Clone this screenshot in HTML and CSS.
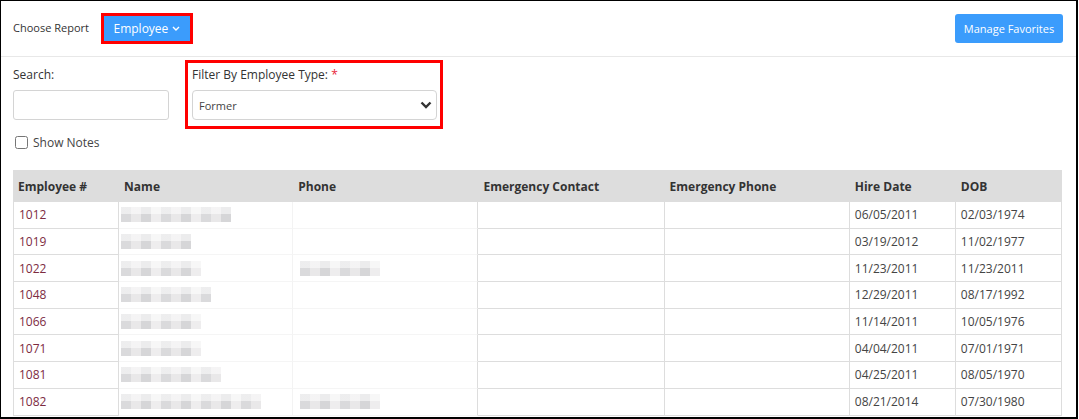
FILE: index.html
```html
<!DOCTYPE html>
<html lang="en">
<head>
    <meta charset="UTF-8">
    <title>Employee Report</title>
    <link rel="stylesheet" href="styles.css">
</head>
<body>
    <div class="frame">
        <div class="toolbar">
            <span class="choose">Choose Report</span>
            <div class="mark">
                <button class="btn report-btn">Employee
                    <svg width="8" height="5" viewBox="0 0 8 5"><path d="M1 1l3 3 3-3" fill="none" stroke="#fff" stroke-width="1.4"/></svg>
                </button>
            </div>
            <button class="btn fav-btn">Manage Favorites</button>
        </div>

        <div class="filters">
            <div class="field search">
                <label>Search:</label>
                <input type="text">
            </div>
            <div class="field mark type">
                <label>Filter By Employee Type: <span class="req">*</span></label>
                <div class="select">
                    <span>Former</span>
                    <svg width="12" height="8" viewBox="0 0 12 8"><path d="M1.5 1.5l4.5 4.5 4.5-4.5" fill="none" stroke="#333" stroke-width="2.4"/></svg>
                </div>
            </div>
        </div>

        <label class="notes"><input type="checkbox"> Show Notes</label>

        <table class="report">
            <thead>
                <tr>
                    <th class="c-id">Employee #</th>
                    <th class="c-name">Name</th>
                    <th class="c-phone">Phone</th>
                    <th class="c-ec">Emergency Contact</th>
                    <th class="c-ep">Emergency Phone</th>
                    <th class="c-date">Hire Date</th>
                    <th class="c-date">DOB</th>
                </tr>
            </thead>
            <tbody>
                <tr>
                    <td class="id">1012</td>
                    <td class="masked"><div class="blur w110"></div></td>
                    <td class="masked phone"></td>
                    <td></td><td></td>
                    <td>06/05/2011</td><td>02/03/1974</td>
                </tr>
                <tr>
                    <td class="id">1019</td>
                    <td class="masked"><div class="blur w70"></div></td>
                    <td class="masked phone"></td>
                    <td></td><td></td>
                    <td>03/19/2012</td><td>11/02/1977</td>
                </tr>
                <tr>
                    <td class="id">1022</td>
                    <td class="masked"><div class="blur w80"></div></td>
                    <td class="masked phone"><div class="blur w80"></div></td>
                    <td></td><td></td>
                    <td>11/23/2011</td><td>11/23/2011</td>
                </tr>
                <tr>
                    <td class="id">1048</td>
                    <td class="masked"><div class="blur w90"></div></td>
                    <td class="masked phone"></td>
                    <td></td><td></td>
                    <td>12/29/2011</td><td>08/17/1992</td>
                </tr>
                <tr>
                    <td class="id">1066</td>
                    <td class="masked"><div class="blur w80"></div></td>
                    <td class="masked phone"></td>
                    <td></td><td></td>
                    <td>11/14/2011</td><td>10/05/1976</td>
                </tr>
                <tr>
                    <td class="id">1071</td>
                    <td class="masked"><div class="blur w80"></div></td>
                    <td class="masked phone"></td>
                    <td></td><td></td>
                    <td>04/04/2011</td><td>07/01/1971</td>
                </tr>
                <tr>
                    <td class="id">1081</td>
                    <td class="masked"><div class="blur w100"></div></td>
                    <td class="masked phone"></td>
                    <td></td><td></td>
                    <td>04/25/2011</td><td>08/05/1970</td>
                </tr>
                <tr>
                    <td class="id">1082</td>
                    <td class="masked"><div class="blur w140"></div></td>
                    <td class="masked phone"><div class="blur w80"></div></td>
                    <td></td><td></td>
                    <td>08/21/2014</td><td>07/30/1980</td>
                </tr>
            </tbody>
        </table>
    </div>
</body>
</html>
```

FILE: styles.css
```css
body {
    margin: 0;
    font-family: "Open Sans", Arial, sans-serif;
    color: #333;
    background: #fff;
}

.frame {
    box-sizing: border-box;
    width: 1078px;
    height: 419px;
    overflow: hidden;
    border-style: solid;
    border-color: #000;
    border-width: 1px 2px 2px 1px;
}

/* top bar */
.toolbar {
    height: 55px;
    display: flex;
    align-items: center;
    padding: 0 13px 0 12px;
    border-bottom: 1px solid #e8e8e8;
}

.choose {
    font-size: 11px;
    margin-right: 12px;
    margin-top: -2px;
}

.mark {
    border: 3px solid #f00;
}

.btn {
    font-family: inherit;
    color: #fff;
    background-color: #3b9cfc;
    border: none;
    cursor: pointer;
    padding: 0;
}

.report-btn {
    width: 86px;
    height: 25px;
    font-size: 12px;
    display: flex;
    align-items: center;
    justify-content: center;
    gap: 4px;
}

.fav-btn {
    margin-left: auto;
    width: 108px;
    height: 29px;
    font-size: 11px;
    border-radius: 3px;
}

/* filters */
.filters {
    display: flex;
    align-items: flex-start;
    gap: 10px;
    padding: 3px 0 0 5px;
}

.field {
    display: flex;
    flex-direction: column;
    padding: 1px 3px 6px 4px;
}

.search {
    border: 3px solid transparent;
}

.field label {
    font-size: 12px;
    line-height: 17px;
    padding: 2px 0 0 0;
    margin-bottom: 7px;
}

.type {
    width: 245px;
}

.req {
    color: #e8253b;
}

.search input {
    box-sizing: border-box;
    width: 156px;
    height: 30px;
    border: 1px solid #d4d4d4;
    border-radius: 3px;
    margin: 0;
}

.select {
    box-sizing: border-box;
    width: 245px;
    height: 30px;
    border: 1px solid #d4d4d4;
    border-radius: 4px;
    display: flex;
    align-items: center;
    justify-content: space-between;
    padding: 0 4px 0 6px;
    font-size: 11px;
    color: #444;
}

.notes {
    display: flex;
    align-items: center;
    gap: 5px;
    font-size: 12px;
    color: #444;
    margin: 4px 0 0 14px;
    height: 18px;
}

.notes input {
    margin: 0;
    width: 13px;
    height: 13px;
}

/* table */
.report {
    margin: 19px 0 0 12px;
    width: 1049px;
    table-layout: fixed;
    border-collapse: separate;
    border-spacing: 0;
    font-size: 12px;
}

.report th {
    box-sizing: border-box;
    background: #dddddd;
    height: 32px;
    text-align: left;
    padding: 0 5px;
    font-weight: bold;
    color: #333;
}

.c-id { width: 106px; }
.c-name { width: 174px; }
.c-phone { width: 185px; }
.c-ec { width: 186px; }
.c-ep { width: 185px; }
.c-date { width: 106px; }

.report td {
    height: 25.7px;
    padding: 0 5px;
    border-right: 1px solid #ddd;
    border-bottom: 1px solid #ddd;
    color: #444;
    white-space: nowrap;
}

.report td:first-child {
    border-left: 1px solid #ddd;
}

.report td.id {
    color: #7d2b3f;
}

.report td.masked {
    padding: 0 2px;
    border-bottom-color: #f5f5f5;
    border-right-color: #f3f3f3;
}

.report td.phone {
    padding-left: 7px;
    border-right-color: #ddd;
}

/* pixelated placeholder for hidden names/phones */
.blur {
    height: 15px;
    background:
        linear-gradient(180deg, rgba(255, 255, 255, 0.55) 0 7px, transparent 7px),
        repeating-linear-gradient(90deg, #d4d4d6 0 10px, #e6e5e6 10px 20px, #cfcfd2 20px 30px, #ecebec 30px 40px),
        #ddd;
    opacity: 0.85;
}

.w70 { width: 70px; }
.w80 { width: 80px; }
.w90 { width: 90px; }
.w100 { width: 100px; }
.w110 { width: 110px; }
.w140 { width: 140px; }
```
